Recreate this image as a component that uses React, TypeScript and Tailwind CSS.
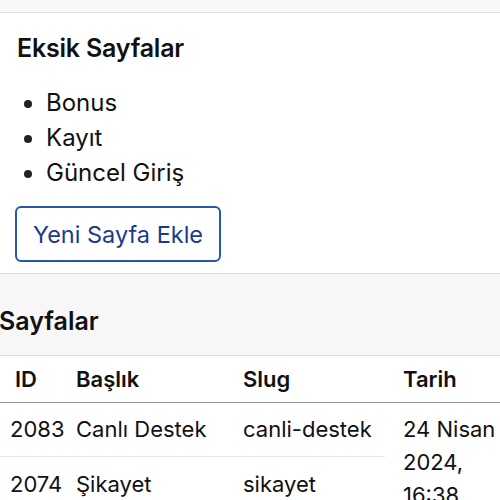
import React from "react";

export default function App() {
  return (
    <div className="w-[500px] h-[500px] overflow-hidden bg-white text-[#111] font-['Inter',sans-serif]">
      <div className="h-[13px] bg-[#f8f8f8] border-b border-[#dedede]" />
      <div className="px-[17px] pt-[18px] h-[261px] border-b border-[#dedede]">
        <h2 className="text-[25px] leading-[34px] font-semibold tracking-[-0.2px]">Eksik Sayfalar</h2>
        <ul className="mt-[20px] list-disc pl-[29px] text-[24px] leading-[35px] marker:text-[#222]">
          <li>Bonus</li>
          <li>Kayıt</li>
          <li>Güncel Giriş</li>
        </ul>
        <button className="mt-[16px] -ml-[2px] h-[56px] px-[16px] pt-[2px] rounded-[6px] border-2 border-[#2558ad] text-[#1c3a8c] text-[23.5px] leading-none">
          Yeni Sayfa Ekle
        </button>
      </div>
      <div className="h-[82px] bg-[#f7f7f7] border-b border-[#dedede] flex items-center">
        <h2 className="text-[25px] font-semibold pt-[14px] -ml-[1px]">Sayfalar</h2>
      </div>
      <table className="border-collapse text-[22px] table-fixed w-[500px]">
        <colgroup>
          <col className="w-[66px]" />
          <col className="w-[167px]" />
          <col className="w-[152px]" />
          <col className="w-[115px]" />
        </colgroup>
        <thead>
          <tr className="h-[46px] border-b border-[#9a9a9a]">
            <th className="text-left font-semibold pl-[15px] pt-[2px]">ID</th>
            <th className="text-left font-semibold pl-[10px] pt-[2px]">Başlık</th>
            <th className="text-left font-semibold pl-[10px] pt-[2px]">Slug</th>
            <th className="text-left font-semibold pl-[18px] pt-[2px]">Tarih</th>
          </tr>
        </thead>
        <tbody>
          <tr className="h-[53px] border-b border-[#e6e6e6]">
            <td className="pl-[10px] whitespace-nowrap">2083</td>
            <td className="pl-[10px] whitespace-nowrap">Canlı Destek</td>
            <td className="pl-[10px] whitespace-nowrap">canli-destek</td>
            <td rowSpan={2} className="pl-[18px] align-top pt-[10px] leading-[33px] bg-white">
              24 Nisan 2024, 16:38
            </td>
          </tr>
          <tr className="h-[54px]">
            <td className="pl-[10px] whitespace-nowrap">2074</td>
            <td className="pl-[10px] whitespace-nowrap">Şikayet</td>
            <td className="pl-[10px] whitespace-nowrap">sikayet</td>
          </tr>
        </tbody>
      </table>
    </div>
  );
}
